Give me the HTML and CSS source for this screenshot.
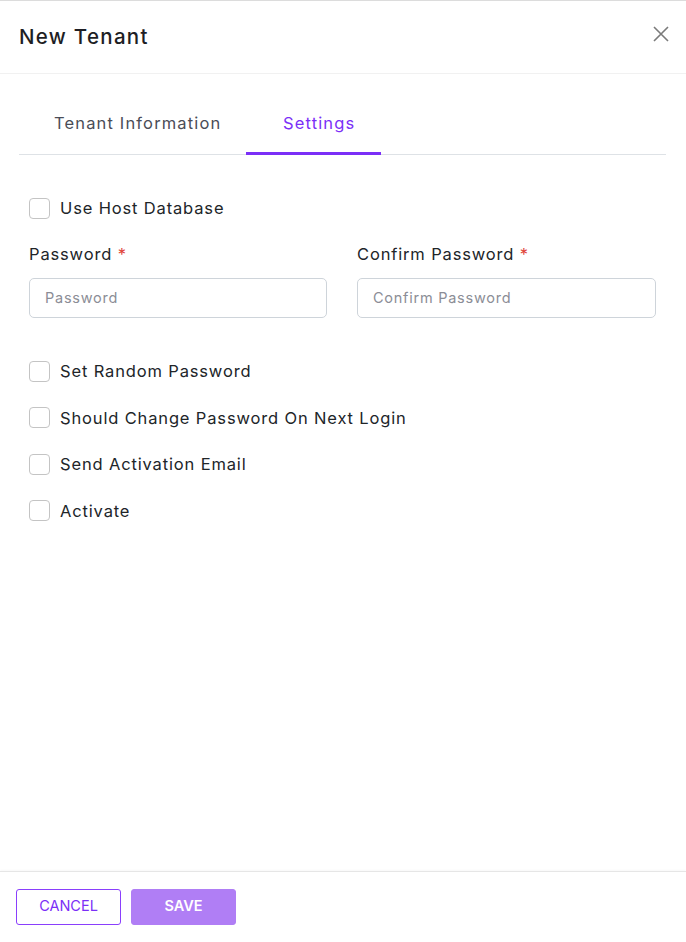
FILE: index.html
```html
<!DOCTYPE html>
<html lang="en">
<head>
<meta charset="utf-8">
<title>New Tenant</title>
<link rel="stylesheet" href="styles.css">
</head>
<body>
<div class="modal">
  <header class="modal-header">
    <h1 class="modal-title">New Tenant</h1>
    <button class="close" aria-label="Close">
      <svg width="16" height="16" viewBox="0 0 16 16"><path d="M1 1L15 15M15 1L1 15" stroke="#7a7a7a" stroke-width="1.6" fill="none"/></svg>
    </button>
  </header>
  <main class="modal-body">
    <nav class="tabs">
      <a class="tab tab-first">Tenant Information</a>
      <a class="tab active">Settings</a>
    </nav>
    <div class="pane">
      <label class="check"><span class="box"></span>Use Host Database</label>
      <div class="grid">
        <div class="field">
          <div class="label">Password <span class="req">*</span></div>
          <input class="input" type="text" placeholder="Password">
        </div>
        <div class="field">
          <div class="label">Confirm Password <span class="req">*</span></div>
          <input class="input" type="text" placeholder="Confirm Password">
        </div>
      </div>
      <div class="checks">
        <label class="check"><span class="box"></span>Set Random Password</label>
        <label class="check"><span class="box"></span>Should Change Password On Next Login</label>
        <label class="check"><span class="box"></span>Send Activation Email</label>
        <label class="check"><span class="box"></span>Activate</label>
      </div>
    </div>
  </main>
  <footer class="modal-footer">
    <button class="btn btn-outline">CANCEL</button>
    <button class="btn btn-primary">SAVE</button>
  </footer>
</div>
</body>
</html>
```
FILE: styles.css
```css
* { box-sizing: border-box; }
html, body { margin: 0; padding: 0; background: #fff; }
body {
  font-family: "Inter", "Open Sans", sans-serif;
  color: #212529;
  width: 686px;
  height: 942px;
  overflow: hidden;
}
.modal {
  height: 942px;
  display: flex;
  flex-direction: column;
  border-top: 1px solid #dcdcdc;
}
.modal-header {
  height: 73px;
  border-bottom: 1px solid #f1f1f1;
  display: flex;
  align-items: center;
  justify-content: space-between;
  padding: 0 17px 0 19px;
}
.modal-title {
  margin: 0 0 2px 0;
  font-size: 20.5px;
  font-weight: 500;
  letter-spacing: 1.3px;
  color: #1e1e24;
}
.close {
  border: 0;
  background: none;
  padding: 0;
  width: 16px;
  height: 16px;
  display: flex;
  margin-top: -6px;
}
.modal-body {
  flex: 1;
  padding: 0 20px 0 19px;
}
.tabs {
  display: flex;
  margin-top: 17px;
  border-bottom: 1px solid #dee2e6;
}
.tab {
  display: block;
  font-size: 16.5px;
  line-height: 24px;
  letter-spacing: 1.15px;
  padding: 20px 0 17px 35px;
  margin-bottom: -1px;
  border-bottom: 3px solid transparent;
  color: #4a4d57;
  white-space: nowrap;
}
.tab-first { width: 227px; }
.tab.active {
  color: #7b2ff7;
  border-bottom-color: #7b2ff7;
  padding-left: 37px;
  width: 135px;
}
.pane {
  padding: 41px 10px 0 10px;
}
.check {
  display: flex;
  align-items: center;
  font-size: 16.5px;
  line-height: 24px;
  letter-spacing: 0.85px;
  color: #212529;
}
.box {
  width: 21px;
  height: 21px;
  border: 1px solid #c4c4c4;
  border-radius: 4px;
  margin-right: 10px;
  flex: none;
}
.grid {
  display: grid;
  grid-template-columns: 298px 299px;
  column-gap: 30px;
  margin-top: 22px;
}
.label {
  font-size: 16.5px;
  line-height: 24px;
  letter-spacing: 0.85px;
  color: #212529;
}
.req { color: #e0443a; }
.input {
  display: block;
  width: 100%;
  height: 40px;
  margin-top: 12px;
  border: 1px solid #ced4da;
  border-radius: 5px;
  padding: 0 15px 2px 15px;
  font-family: inherit;
  font-size: 14.5px;
  letter-spacing: 0.75px;
  color: #212529;
  outline: none;
}
.input::placeholder { color: #8b8d96; }
.checks {
  margin-top: 41px;
  display: flex;
  flex-direction: column;
  gap: 22.5px;
}
.modal-footer {
  border-top: 1px solid #e6e6e6;
  box-shadow: 0 -1px 2px rgba(0,0,0,0.03);
  padding: 17px 16px;
  display: flex;
  gap: 10px;
}
.btn {
  width: 105px;
  height: 36px;
  border-radius: 3px;
  padding: 0 0 3px 0;
  font-family: inherit;
  font-size: 14.5px;
  cursor: pointer;
}
.btn-outline {
  background: #fff;
  border: 1px solid #8a3ffc;
  color: #7b2ff7;
  font-weight: 400;
}
.btn-primary {
  background: #b07ef5;
  border: 1px solid #b07ef5;
  color: #fff;
  font-weight: 600;
}
```
